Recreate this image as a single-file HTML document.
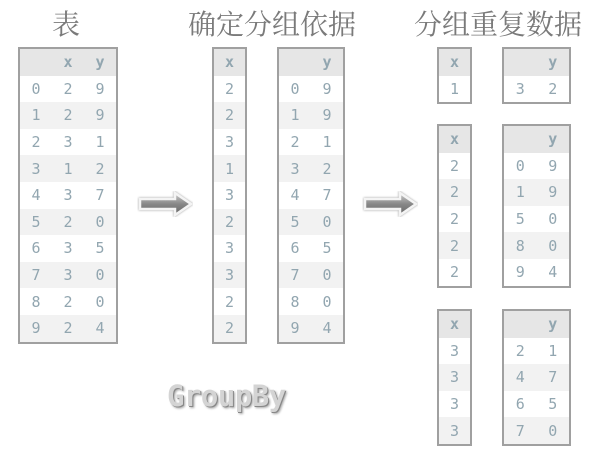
<!DOCTYPE html>
<html><head><meta charset="utf-8"><style>
body{margin:0;width:607px;height:455px;background:#fff;position:relative;overflow:hidden;font-family:"DejaVu Sans Mono","Liberation Mono",monospace;}
.t{position:absolute;border:2px solid #a0a0a0;box-sizing:border-box;}
.r{display:flex;height:26.6px;align-items:center;color:#92a6b0;font-size:15px;}
.r:nth-child(odd){background:#f2f2f2}
.r:nth-child(1){background:#e6e6e6;font-weight:bold}
.r:nth-child(even){background:#fff}
.c{width:33px;text-align:center}
.h{position:absolute;top:3px;font-family:"Noto Serif CJK SC","Noto Sans CJK SC",serif;font-size:28px;color:#7a7a7a;}
.arr{position:absolute;width:56px;height:26px}
.gb{position:absolute;left:167px;top:379px;font-family:"DejaVu Sans Mono",monospace;font-weight:bold;font-size:29px;color:#d4d4d4;text-shadow:1px 1px 0 #888,2px 2px 2px #aaa;letter-spacing:-0.5px}
</style></head><body>
<div class="h" style="left:52px">表</div>
<div class="h" style="left:188px">确定分组依据</div>
<div class="h" style="left:414px">分组重复数据</div>

<div class="t" style="left:18px;top:47px;width:100px">
<div class="r"><span class="c"></span><span class="c">x</span><span class="c">y</span></div>
<div class="r"><span class="c">0</span><span class="c">2</span><span class="c">9</span></div>
<div class="r"><span class="c">1</span><span class="c">2</span><span class="c">9</span></div>
<div class="r"><span class="c">2</span><span class="c">3</span><span class="c">1</span></div>
<div class="r"><span class="c">3</span><span class="c">1</span><span class="c">2</span></div>
<div class="r"><span class="c">4</span><span class="c">3</span><span class="c">7</span></div>
<div class="r"><span class="c">5</span><span class="c">2</span><span class="c">0</span></div>
<div class="r"><span class="c">6</span><span class="c">3</span><span class="c">5</span></div>
<div class="r"><span class="c">7</span><span class="c">3</span><span class="c">0</span></div>
<div class="r"><span class="c">8</span><span class="c">2</span><span class="c">0</span></div>
<div class="r"><span class="c">9</span><span class="c">2</span><span class="c">4</span></div>
</div>

<div class="t" style="left:212px;top:47px;width:35px">
<div class="r"><span class="c">x</span></div>
<div class="r"><span class="c">2</span></div><div class="r"><span class="c">2</span></div><div class="r"><span class="c">3</span></div><div class="r"><span class="c">1</span></div><div class="r"><span class="c">3</span></div><div class="r"><span class="c">2</span></div><div class="r"><span class="c">3</span></div><div class="r"><span class="c">3</span></div><div class="r"><span class="c">2</span></div><div class="r"><span class="c">2</span></div>
</div>

<div class="t" style="left:277px;top:47px;width:68px">
<div class="r"><span class="c"></span><span class="c">y</span></div>
<div class="r"><span class="c">0</span><span class="c">9</span></div>
<div class="r"><span class="c">1</span><span class="c">9</span></div>
<div class="r"><span class="c">2</span><span class="c">1</span></div>
<div class="r"><span class="c">3</span><span class="c">2</span></div>
<div class="r"><span class="c">4</span><span class="c">7</span></div>
<div class="r"><span class="c">5</span><span class="c">0</span></div>
<div class="r"><span class="c">6</span><span class="c">5</span></div>
<div class="r"><span class="c">7</span><span class="c">0</span></div>
<div class="r"><span class="c">8</span><span class="c">0</span></div>
<div class="r"><span class="c">9</span><span class="c">4</span></div>
</div>

<div class="t" style="left:437px;top:47px;width:35px">
<div class="r"><span class="c">x</span></div><div class="r"><span class="c">1</span></div></div>
<div class="t" style="left:502px;top:47px;width:69px">
<div class="r"><span class="c"></span><span class="c">y</span></div><div class="r"><span class="c">3</span><span class="c">2</span></div></div>

<div class="t" style="left:437px;top:124px;width:35px">
<div class="r"><span class="c">x</span></div><div class="r"><span class="c">2</span></div><div class="r"><span class="c">2</span></div><div class="r"><span class="c">2</span></div><div class="r"><span class="c">2</span></div><div class="r"><span class="c">2</span></div></div>
<div class="t" style="left:502px;top:124px;width:69px">
<div class="r"><span class="c"></span><span class="c">y</span></div>
<div class="r"><span class="c">0</span><span class="c">9</span></div>
<div class="r"><span class="c">1</span><span class="c">9</span></div>
<div class="r"><span class="c">5</span><span class="c">0</span></div>
<div class="r"><span class="c">8</span><span class="c">0</span></div>
<div class="r"><span class="c">9</span><span class="c">4</span></div></div>

<div class="t" style="left:437px;top:309px;width:35px">
<div class="r"><span class="c">x</span></div><div class="r"><span class="c">3</span></div><div class="r"><span class="c">3</span></div><div class="r"><span class="c">3</span></div><div class="r"><span class="c">3</span></div></div>
<div class="t" style="left:502px;top:309px;width:69px">
<div class="r"><span class="c"></span><span class="c">y</span></div>
<div class="r"><span class="c">2</span><span class="c">1</span></div>
<div class="r"><span class="c">4</span><span class="c">7</span></div>
<div class="r"><span class="c">6</span><span class="c">5</span></div>
<div class="r"><span class="c">7</span><span class="c">0</span></div></div>

<svg class="arr" style="left:137px;top:191px" viewBox="0 0 56 26">
<defs><linearGradient id="g" x1="0" y1="0" x2="0" y2="1"><stop offset="0" stop-color="#ccc"/><stop offset="0.5" stop-color="#888"/><stop offset="1" stop-color="#666"/></linearGradient></defs>
<path d="M3 8 H38 V2 L54 13 L38 24 V18 H3 Z" fill="url(#g)" stroke="#f4f4f4" stroke-width="2.5" style="filter:drop-shadow(0 0 1px #999)"/></svg>
<svg class="arr" style="left:362px;top:191px" viewBox="0 0 56 26">
<path d="M3 8 H38 V2 L54 13 L38 24 V18 H3 Z" fill="url(#g)" stroke="#f4f4f4" stroke-width="2.5" style="filter:drop-shadow(0 0 1px #999)"/></svg>

<div class="gb">GroupBy</div>
</body></html>
